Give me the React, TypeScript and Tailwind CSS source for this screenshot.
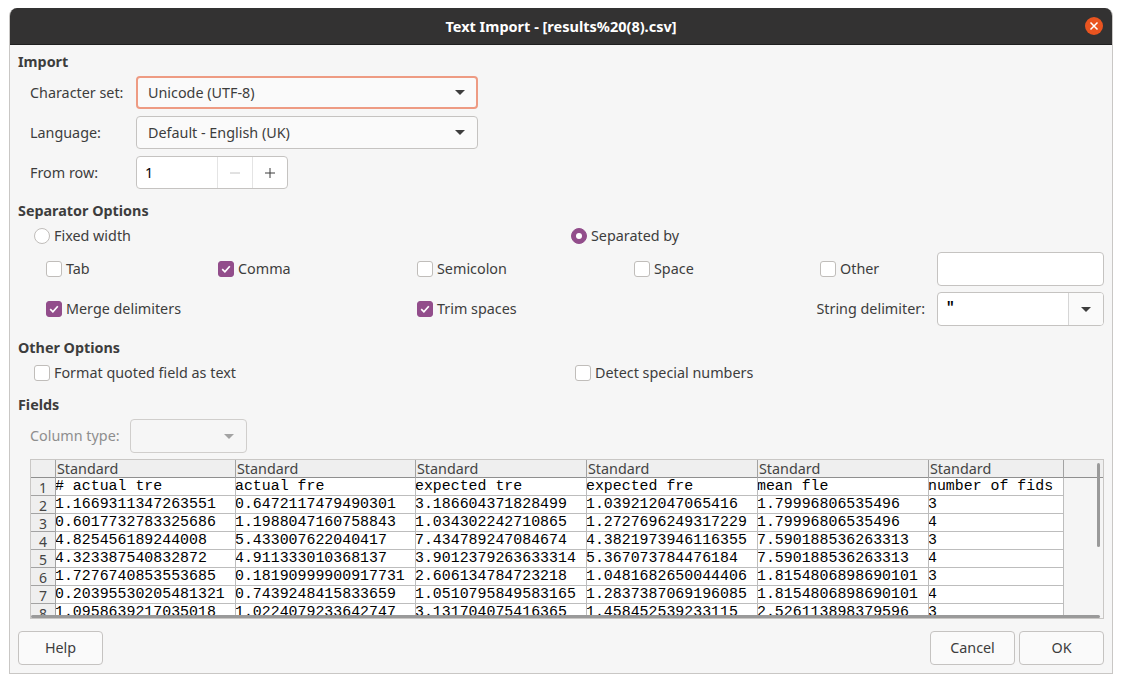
import React from "react";

const SANS = "font-['Noto_Sans',sans-serif]";

function Check({ on }: { on?: boolean }) {
  return (
    <span className={`flex h-[16px] w-[16px] shrink-0 items-center justify-center rounded-[3px] border ${on ? "border-[#924d8b] bg-[#924d8b]" : "border-[#c0bdba] bg-white"}`}>
      {on && (
        <svg width="12" height="12" viewBox="0 0 12 12" fill="none">
          <path d="M2.2 6.2 L4.9 8.8 L9.8 3.2" stroke="white" strokeWidth="1.7" />
        </svg>
      )}
    </span>
  );
}

function CheckLabel({ on, label }: { on?: boolean; label: string }) {
  return (
    <div className="flex items-center gap-[4px]">
      <Check on={on} />
      <span>{label}</span>
    </div>
  );
}

function Radio({ on, label }: { on?: boolean; label: string }) {
  return (
    <div className="flex items-center gap-[4px]">
      <span className={`flex h-[16px] w-[16px] items-center justify-center rounded-full border ${on ? "border-[#924d8b] bg-[#924d8b]" : "border-[#c0bdba] bg-white"}`}>
        {on && <span className="h-[6px] w-[6px] rounded-full bg-white" />}
      </span>
      <span>{label}</span>
    </div>
  );
}

function Caret({ color = "#3d3d3d" }: { color?: string }) {
  return (
    <svg width="10" height="5" viewBox="0 0 10 5">
      <path d="M0 0 H10 L5 5 Z" fill={color} />
    </svg>
  );
}

function Select({ text, focus }: { text: string; focus?: boolean }) {
  return (
    <div className={`flex h-[33px] w-[342px] items-center justify-between rounded-[4px] bg-[#fafafa] ${focus ? "border-2 border-[#ee9b83] pl-[10px] pr-[11px]" : "border border-[#c5c3c1] pl-[11px] pr-[12px]"}`}>
      <span>{text}</span>
      <Caret />
    </div>
  );
}

const Heading = ({ children, className = "" }: { children: React.ReactNode; className?: string }) => (
  <div className={`font-bold text-[#3d3d3d] leading-[20px] ${className}`}>{children}</div>
);

const COLS = "grid-cols-[25px_180px_180px_171px_171px_171px_135px]";

const rows = [
  ["# actual tre", "actual fre", "expected tre", "expected fre", "mean fle", "number of fids"],
  ["1.1669311347263551", "0.6472117479490301", "3.186604371828499", "1.039212047065416", "1.79996806535496", "3"],
  ["0.6017732783325686", "1.1988047160758843", "1.034302242710865", "1.2727696249317229", "1.79996806535496", "4"],
  ["4.825456189244008", "5.433007622040417", "7.434789247084674", "4.3821973946116355", "7.590188536263313", "3"],
  ["4.323387540832872", "4.911333010368137", "3.9012379263633314", "5.367073784476184", "7.590188536263313", "4"],
  ["1.7276740853553685", "0.18190999900917731", "2.606134784723218", "1.0481682650044406", "1.8154806898690101", "3"],
  ["0.20395530205481321", "0.7439248415833659", "1.0510795849583165", "1.2837387069196085", "1.8154806898690101", "4"],
  ["1.0958639217035018", "1.0224079233642747", "3.131704075416365", "1.458452539233115", "2.526113898379596", "3"],
];

function Table() {
  return (
    <div className="relative ml-[12px] mt-[6px] h-[160px] w-[1074px] overflow-hidden border border-[#c9c7c5] bg-[#f5f5f5]">
      <div className={`grid h-[18px] grid-rows-[18px] ${COLS} border-b border-[#8f8f8f] bg-[#efefef]`}>
        <div className="border-r border-[#a3a3a3]" />
        {[0, 1, 2, 3, 4, 5].map((i) => (
          <div key={i} className="border-r border-[#a3a3a3] pl-[1px] leading-[17px] text-[#444]">Standard</div>
        ))}
      </div>
      {rows.map((r, i) => (
        <div key={i} className={`grid h-[18px] grid-rows-[18px] ${COLS}`}>
          <div className="overflow-hidden border-b border-r border-[#a3a3a3] bg-[#efefef] pr-[8px] text-right text-[14px] leading-[20px] text-[#444]">{i + 1}</div>
          {r.map((c, j) => (
            <div key={j} className="overflow-hidden whitespace-nowrap border-b border-r border-[#bdbdbd] bg-white font-['Liberation_Mono',monospace] text-[14.9px] leading-[16px] indent-[-1px] text-black">{c}</div>
          ))}
        </div>
      ))}
      <div className="absolute bottom-0 left-0 right-[3px] h-[3px] rounded-full bg-[#9a9a9a]" />
      <div className="absolute right-[3px] top-[3px] h-[84px] w-[3px] rounded-full bg-[#9a9a9a]" />
    </div>
  );
}

export default function App() {
  return (
    <div className={`${SANS} h-[683px] w-[1122px] overflow-hidden bg-white pl-[9px] pt-[8px] text-[14.35px] text-[#3d3d3d]`}>
      <div className="h-[666px] w-[1104px] overflow-hidden rounded-t-[8px] border-x border-b border-[#c9c7c5] bg-[#f6f6f6]">
        <div className="relative flex h-[37px] items-center justify-center border-b border-[#1f1f1f] bg-[#333232] pt-[1px] text-[14.5px] font-bold text-white">
          Text Import - [results%20(8).csv]
          <span className="absolute right-[9px] top-[9px] flex h-[18px] w-[18px] items-center justify-center rounded-full bg-[#e95420]">
            <svg width="10" height="10" viewBox="0 0 10 10"><path d="M1.5 1.5 L8.5 8.5 M8.5 1.5 L1.5 8.5" stroke="white" strokeWidth="1.5" /></svg>
          </span>
        </div>

        <div className="flex flex-col pl-[8px] pr-[8px]">
          <Heading className="mt-[7px]">Import</Heading>

          <div className="ml-[12px] mt-[4px] flex flex-col gap-[7px]">
            <div className="flex items-center">
              <span className="w-[106px]">Character set:</span>
              <Select text="Unicode (UTF-8)" focus />
            </div>
            <div className="flex items-center">
              <span className="w-[106px]">Language:</span>
              <Select text="Default - English (UK)" />
            </div>
            <div className="flex items-center">
              <span className="w-[106px]">From row:</span>
              <div className="flex h-[33px] w-[152px] items-center overflow-hidden rounded-[4px] border border-[#c5c3c1] bg-white text-black">
                <span className="w-[80px] pl-[8px]">1</span>
                <span className="flex h-full w-[35px] items-center justify-center border-l border-[#e4e4e4]">
                  <svg width="12" height="12" viewBox="0 0 12 12"><path d="M1 6 H11" stroke="#c4c4c4" /></svg>
                </span>
                <span className="flex h-full flex-1 items-center justify-center border-l border-[#e4e4e4]">
                  <svg width="12" height="12" viewBox="0 0 12 12"><path d="M1 6 H11 M6 1 V11" stroke="#3d3d3d" /></svg>
                </span>
              </div>
            </div>
          </div>

          <Heading className="mt-[12px]">Separator Options</Heading>

          <div className="ml-[16px] mt-[4px] grid h-[20px] grid-cols-[537px_auto] items-center">
            <Radio label="Fixed width" />
            <Radio on label="Separated by" />
          </div>

          <div className="ml-[28px] mt-[7px] grid h-[34px] grid-cols-[172px_199px_217px_186px_117px_167px] items-center">
            <CheckLabel label="Tab" />
            <CheckLabel on label="Comma" />
            <CheckLabel label="Semicolon" />
            <CheckLabel label="Space" />
            <CheckLabel label="Other" />
            <div className="h-[34px] rounded-[4px] border border-[#c5c3c1] bg-white" />
          </div>

          <div className="ml-[28px] mt-[6px] grid h-[34px] grid-cols-[172px_199px_217px_186px_117px_167px] items-center">
            <div className="col-span-2"><CheckLabel on label="Merge delimiters" /></div>
            <CheckLabel on label="Trim spaces" />
            <div className="col-span-2 pr-[12px] text-right">String delimiter:</div>
            <div className="flex h-[34px] overflow-hidden rounded-[4px] border border-[#c5c3c1] bg-white">
              <span className="flex flex-1 items-center pl-[8px] font-['Liberation_Mono',monospace] font-bold text-black">"</span>
              <span className="flex w-[35px] items-center justify-center border-l border-[#d6d6d6] bg-[#fafafa]"><Caret /></span>
            </div>
          </div>

          <Heading className="mt-[12px]">Other Options</Heading>

          <div className="ml-[16px] mt-[4px] grid h-[20px] grid-cols-[541px_auto] items-center">
            <CheckLabel label="Format quoted field as text" />
            <CheckLabel label="Detect special numbers" />
          </div>

          <Heading className="mt-[13px]">Fields</Heading>

          <div className="ml-[12px] mt-[4px] flex items-center text-[#8e8e8e]">
            <span className="w-[100px]">Column type:</span>
            <div className="flex h-[34px] w-[117px] items-center justify-end rounded-[4px] border border-[#d0cecc] bg-[#f6f6f6] pr-[12px]">
              <Caret color="#a3a3a3" />
            </div>
          </div>

          <Table />

          <div className="mt-[12px] flex items-center gap-[4px]">
            <button className="h-[34px] w-[85px] rounded-[4px] border border-[#c5c3c1] bg-[#fafafa] text-[#3d3d3d]">Help</button>
            <div className="flex-1" />
            <button className="h-[34px] w-[85px] rounded-[4px] border border-[#c5c3c1] bg-[#fafafa] text-[#3d3d3d]">Cancel</button>
            <button className="h-[34px] w-[85px] rounded-[4px] border border-[#c5c3c1] bg-[#fafafa] text-[#3d3d3d]">OK</button>
          </div>
        </div>
      </div>
    </div>
  );
}
